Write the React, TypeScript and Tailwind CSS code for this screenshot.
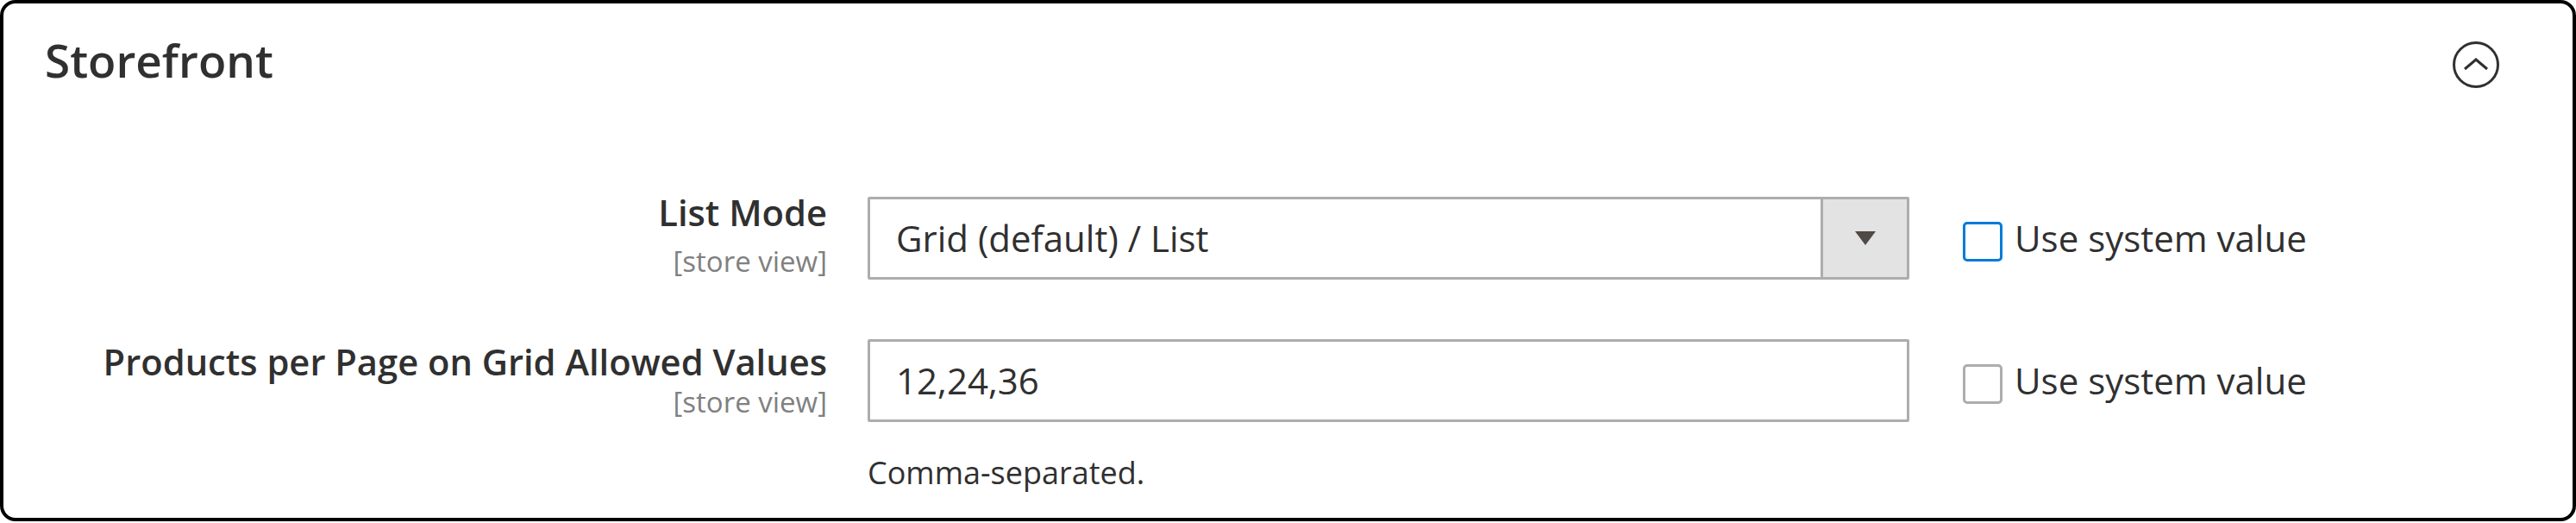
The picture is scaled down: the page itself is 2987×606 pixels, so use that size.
import React from 'react';

const CollapseIcon = () => (
  <svg width="54" height="54" viewBox="0 0 54 54" fill="none" className="block">
    <circle cx="27" cy="27" r="25.5" stroke="#303030" strokeWidth="3" />
    <polyline points="14,32 27,21 40,32" stroke="#303030" strokeWidth="3" strokeLinejoin="miter" />
  </svg>
);

const SystemValue = ({ active }: { active?: boolean }) => (
  <div className="flex items-start gap-[14px] mt-[20px]">
    <span
      className={`mt-[9px] block w-[46px] h-[46px] rounded-[5px] border-[3px] bg-white ${
        active ? 'border-[#007bdb]' : 'border-[#adadad]'
      }`}
    />
    <span className="text-[42px] leading-[56px] text-[#303030]">Use system value</span>
  </div>
);

export default function App() {
  return (
    <div className="w-[2987px] h-[606px] bg-white" style={{ fontFamily: '"Open Sans", "Noto Sans", sans-serif' }}>
      <div className="w-full h-[604px] border-4 border-black rounded-[18px] bg-white">
        {/* header */}
        <div className="flex items-start justify-between pl-[48px] pr-[85px] pt-[30px]">
          <h2 className="text-[53px] leading-[72px] font-semibold text-[#303030]">Storefront</h2>
          <div className="mt-[14px]">
            <CollapseIcon />
          </div>
        </div>

        {/* List Mode */}
        <div className="flex items-start mt-[122px]">
          <div className="w-[955px] shrink-0 text-right">
            <div className="text-[41.7px] leading-[36px] font-semibold text-[#303030]">List Mode</div>
            <div className="mt-[16px] text-[33px] leading-[45px] text-[#808080]">[store view]</div>
          </div>
          <div className="ml-[47px] w-[1208px] shrink-0 h-[96px] flex border-[3px] border-[#adadad] rounded-[2px] bg-white">
            <div className="flex-1 flex items-center pl-[30px] text-[42px] leading-[56px] text-[#303030]">
              Grid (default) / List
            </div>
            <div className="w-[100px] border-l-[3px] border-[#adadad] bg-[#e3e3e3] flex items-center justify-center">
              <svg width="24" height="16" viewBox="0 0 24 16" className="block">
                <polygon points="0,0 24,0 12,16" fill="#514943" />
              </svg>
            </div>
          </div>
          <div className="ml-[62px]">
            <SystemValue active />
          </div>
        </div>

        {/* Products per Page */}
        <div className="flex items-start mt-[68px]">
          <div className="w-[955px] shrink-0 text-right">
            <div className="mt-[8px] text-[41.7px] leading-[36px] font-semibold text-[#303030]">
              Products per Page on Grid Allowed Values
            </div>
            <div className="mt-[6px] text-[33px] leading-[45px] text-[#808080]">[store view]</div>
          </div>
          <div className="ml-[47px] w-[1208px] shrink-0">
            <div className="h-[96px] flex items-center border-[3px] border-[#adadad] rounded-[2px] pl-[30px] text-[42px] leading-[56px] text-[#303030]">
              12,24,36
            </div>
            <div className="mt-[35px] text-[36px] leading-[48px] text-[#303030]">Comma-separated.</div>
          </div>
          <div className="ml-[62px]">
            <SystemValue />
          </div>
        </div>
      </div>
    </div>
  );
}
